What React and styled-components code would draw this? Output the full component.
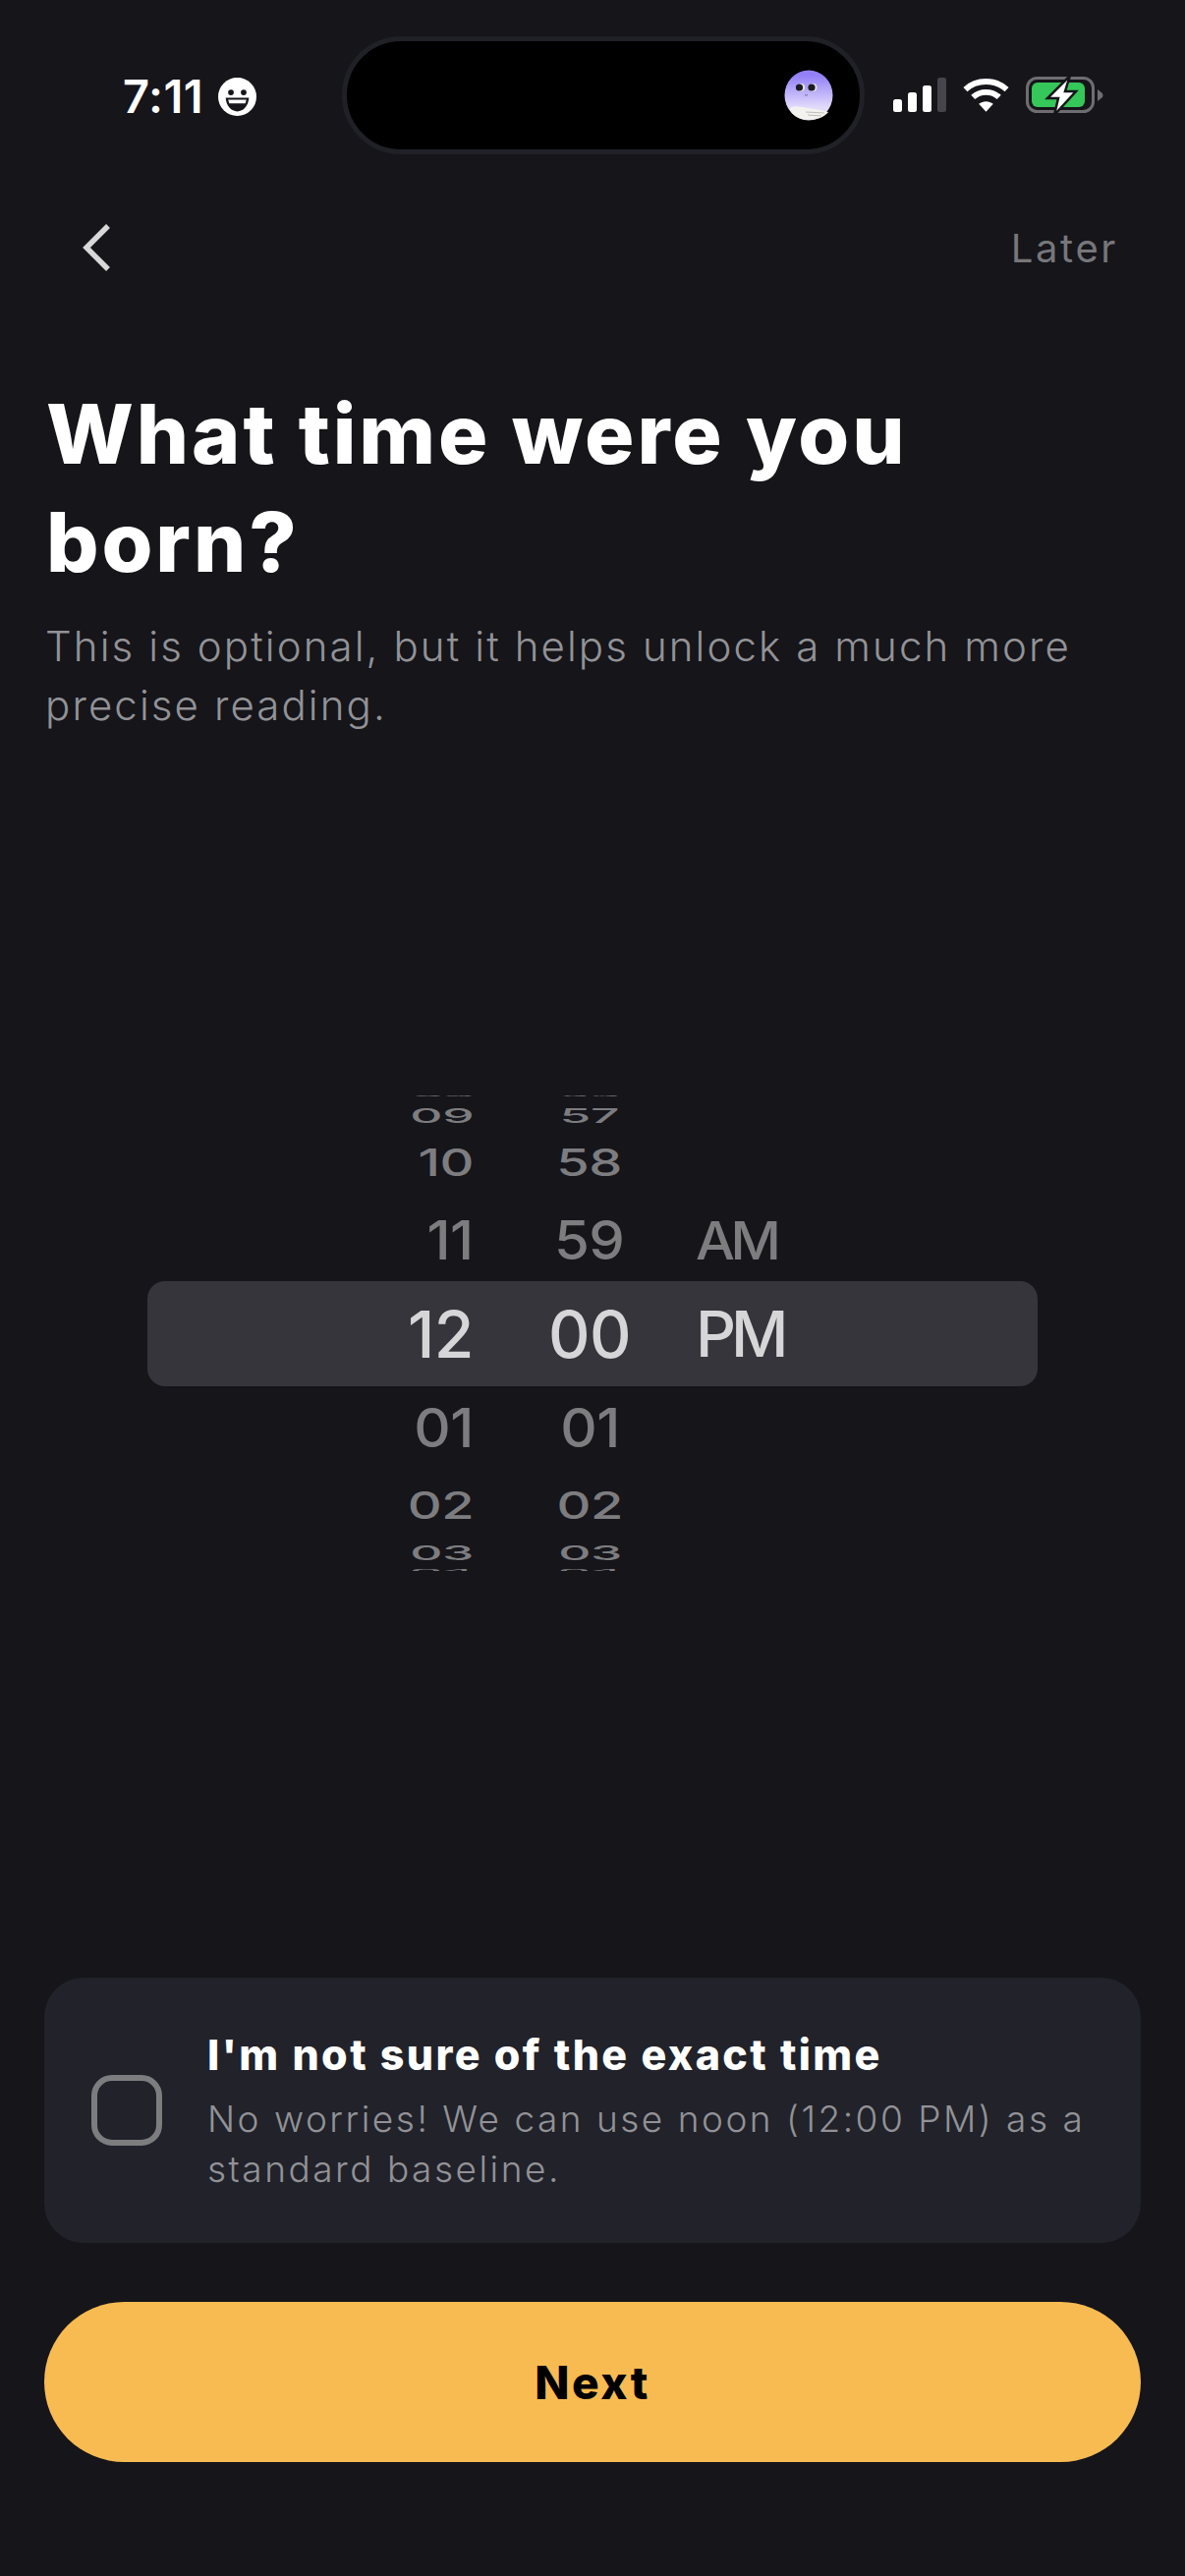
import React from 'react'
import styled, { createGlobalStyle } from 'styled-components'

const Global = createGlobalStyle`
  html, body { margin: 0; padding: 0; background: #15151a; }
  * { box-sizing: border-box; }
`

const Screen = styled.div`
  width: 1206px;
  height: 2622px;
  background: #15151a;
  font-family: "Inter", "Liberation Sans", sans-serif;
  color: #fff;
  display: flex;
  flex-direction: column;
  overflow: hidden;
`

const StatusBar = styled.div`
  height: 156px;
  padding-top: 37px;
  display: flex;
  align-items: flex-start;
  position: relative;
`

const Clock = styled.div`
  margin: 36px 0 0 125px;
  width: 223px;
  display: flex;
  align-items: center;
  gap: 15px;
  font-size: 47px;
  font-weight: 600;
  line-height: 50px;
  letter-spacing: 0.5px;
`

const Island = styled.div`
  width: 532px;
  height: 120px;
  background: #000;
  border: 5px solid #202127;
  border-radius: 60px;
  display: flex;
  align-items: center;
  justify-content: flex-end;
  padding-right: 27px;
`

const StatusIcons = styled.div`
  margin: 40px 0 0 29px;
  display: flex;
  align-items: center;
  gap: 17px;
`

const Header = styled.div`
  height: 80px;
  margin-top: 56px;
  padding: 0 68px 0 83px;
  display: flex;
  align-items: center;
  justify-content: space-between;
`

const Later = styled.div`
  font-size: 40px;
  color: #77777b;
  letter-spacing: 2.6px;
`

const Title = styled.h1`
  margin: 95px 0 0 47px;
  font-size: 84px;
  line-height: 110px;
  font-weight: 800;
  letter-spacing: 2.9px;
`

const Subtitle = styled.p`
  margin: 21px 0 0 46px;
  width: 1100px;
  font-size: 42px;
  line-height: 60px;
  font-weight: 300;
  letter-spacing: 2.1px;
  color: #929296;
`

const WheelArea = styled.div`
  position: relative;
  margin-top: 367px;
  height: 484px;
  overflow: hidden;
  display: flex;
  padding-left: 350px;
`

const Highlight = styled.div`
  position: absolute;
  left: 150px;
  top: 189px;
  width: 906px;
  height: 107px;
  border-radius: 18px;
  background: #35353b;
`

const WheelColumn = styled.div`
  position: relative;
  width: ${p => p.$width}px;
  margin-top: -6px;
  margin-right: ${p => p.$gap || 0}px;
  display: flex;
  flex-direction: column;
  align-items: ${p => p.$align};
`

const WheelRow = styled.div`
  flex: none;
  height: ${p => p.$height}px;
  display: flex;
  align-items: center;
  font-size: ${p => (p.$letters ? 64 : 66)}px;
  font-weight: 500;
  letter-spacing: ${p => (p.$letters ? -5 : -0.5)}px;
  white-space: nowrap;
  color: ${p => (p.$active ? '#d6d6d8' : '#7d7d80')};
  transform: scale(${p => p.$sx}, ${p => p.$sy});
  transform-origin: ${p => p.$origin} center;
`

const Card = styled.div`
  margin: 0 45px;
  margin-top: 414px;
  height: 270px;
  border-radius: 40px;
  background: #21222a;
  display: flex;
  align-items: center;
  padding: 0 47px 0 48px;
  gap: 46px;
`

const CheckBox = styled.div`
  flex: none;
  width: 72px;
  height: 72px;
  border: 6px solid #7d7d80;
  border-radius: 21px;
`

const CardText = styled.div`
  display: flex;
  flex-direction: column;
`

const CardTitle = styled.div`
  font-size: 43px;
  line-height: 56px;
  font-weight: 800;
  letter-spacing: 2.4px;
`

const CardBody = styled.div`
  font-size: 37px;
  line-height: 51px;
  font-weight: 300;
  letter-spacing: 2.5px;
  color: #929296;
  margin-top: 12px;
`

const NextButton = styled.button`
  margin: 60px 45px 0;
  height: 163px;
  border: none;
  border-radius: 82px;
  background: #f8bb51;
  color: #000;
  font-family: inherit;
  font-size: 46px;
  font-weight: 800;
  letter-spacing: 2.5px;
`

// rows run top to bottom; each height puts the row's centre where the wheel has it
const rowShape = [
  { height: 12, sx: 0.76, sy: 0.06 },
  { height: 29, sx: 0.78, sy: 0.31 },
  { height: 66, sx: 0.82, sy: 0.58 },
  { height: 92, sx: 0.88, sy: 0.83 },
  { height: 99, sx: 1, sy: 1 },
  { height: 92, sx: 0.88, sy: 0.83 },
  { height: 65, sx: 0.82, sy: 0.58 },
  { height: 33, sx: 0.78, sy: 0.31 },
  { height: 4, sx: 0.76, sy: 0.06 },
]

const hours = ['08', '09', '10', '11', '12', '01', '02', '03', '04']
const minutes = ['56', '57', '58', '59', '00', '01', '02', '03', '04']
const periods = ['', '', '', 'AM', 'PM', '', '', '', '']

function Column({ values, width, gap, align, origin, letters }) {
  return (
    <WheelColumn $width={width} $gap={gap} $align={align}>
      {values.map((value, i) => (
        <WheelRow
          key={i}
          $height={rowShape[i].height}
          $sx={rowShape[i].sx}
          $sy={rowShape[i].sy}
          $origin={origin}
          $active={i === 4}
          $letters={letters}
        >
          {value}
        </WheelRow>
      ))}
    </WheelColumn>
  )
}

function Smiley() {
  return (
    <svg width="39" height="39" viewBox="0 0 38 38">
      <circle cx="19" cy="19" r="19" fill="#fff" />
      <circle cx="12.7" cy="14.7" r="2.8" fill="#15151a" />
      <circle cx="25.3" cy="14.7" r="2.8" fill="#15151a" />
      <path d="M7.5 20 H30.5 C30 28 25 33.5 19 33.5 C13 33.5 8 28 7.5 20 Z" fill="#15151a" />
      <path d="M10 22 H28 L27 25.5 H11 Z" fill="#fff" />
    </svg>
  )
}

function Avatar() {
  return (
    <svg width="50" height="52" viewBox="0 0 50 52">
      <defs>
        <linearGradient id="moon" x1="0" y1="0" x2="0" y2="1">
          <stop offset="0.1" stopColor="#9380f8" />
          <stop offset="0.75" stopColor="#e2dcfb" />
        </linearGradient>
      </defs>
      <ellipse cx="25" cy="26" rx="24.5" ry="25.5" fill="url(#moon)" />
      <circle cx="17" cy="18" r="4" fill="#e8e4e0" />
      <circle cx="29.5" cy="18" r="4" fill="#e8e4e0" />
      <circle cx="15.5" cy="18" r="3.6" fill="#1d1b25" />
      <circle cx="28" cy="18" r="3.6" fill="#1d1b25" />
      <path d="M21 25.5 Q22.5 27 24 25.5" fill="none" stroke="#5a4ea8" strokeWidth="0.8" />
      <path d="M6 41 C7 36 13 37 24 39 C32 40 39 41 45 43 C38 53 13 55 6 41 Z" fill="#f4f2ee" />
      <path d="M22 43 L41 44 M24 46 L38 47" stroke="#a8a6a2" strokeWidth="0.7" />
    </svg>
  )
}

function Signal() {
  return (
    <svg width="54" height="36" viewBox="0 0 54 36">
      <rect x="0" y="22" width="9" height="13" rx="2.5" fill="#fff" />
      <rect x="15" y="15" width="9" height="20" rx="2.5" fill="#fff" />
      <rect x="30" y="8" width="9" height="27" rx="2.5" fill="#fff" />
      <rect x="45" y="0" width="9" height="35" rx="2.5" fill="#45454b" />
    </svg>
  )
}

function Wifi() {
  return (
    <svg width="47" height="36" viewBox="0 0 48 36" fill="none" stroke="#fff" strokeWidth="6">
      <path d="M2.5 12 C14 1 34 1 45.5 12" />
      <path d="M10.5 20 C18 13 30 13 37.5 20" />
      <path d="M24 35 L16.5 27 C21 23.5 27 23.5 31.5 27 Z" fill="#fff" stroke="none" />
    </svg>
  )
}

function Battery() {
  return (
    <svg width="80" height="40" viewBox="0 0 80 40">
      <rect x="1.5" y="2.5" width="67" height="34" rx="10" fill="none" stroke="#6e6e72" strokeWidth="3" />
      <rect x="6" y="7" width="54" height="25" rx="6" fill="#35c759" />
      <path d="M73 14 L78 18 Q79 20 78 22 L73 26 Z" fill="#6e6e72" />
      <path d="M45 0 L22 23 H33 L29 40 L51 16 H40 Z" fill="#fff" stroke="#15151a" strokeWidth="2.5" />
    </svg>
  )
}

function BackChevron() {
  return (
    <svg width="34" height="52" viewBox="0 0 34 52" fill="none" stroke="#d8d8d8" strokeWidth="5.5" strokeLinejoin="miter">
      <path d="M27 4 L5 26 L27 48" />
    </svg>
  )
}

export default function App() {
  return (
    <Screen>
      <Global />
      <StatusBar>
        <Clock>
          7:11
          <Smiley />
        </Clock>
        <Island>
          <Avatar />
        </Island>
        <StatusIcons>
          <Signal />
          <Wifi />
          <Battery />
        </StatusIcons>
      </StatusBar>
      <Header>
        <BackChevron />
        <Later>Later</Later>
      </Header>
      <Title>
        What time were you
        <br />
        born?
      </Title>
      <Subtitle>This is optional, but it helps unlock a much more precise reading.</Subtitle>
      <WheelArea>
        <Highlight />
        <Column values={hours} width={132} gap={38} align="flex-end" origin="right" />
        <Column values={minutes} width={160} gap={28} align="center" origin="center" />
        <Column values={periods} width={120} align="flex-start" origin="left" letters />
      </WheelArea>
      <Card>
        <CheckBox />
        <CardText>
          <CardTitle>I'm not sure of the exact time</CardTitle>
          <CardBody>No worries! We can use noon (12:00 PM) as a standard baseline.</CardBody>
        </CardText>
      </Card>
      <NextButton>Next</NextButton>
    </Screen>
  )
}
